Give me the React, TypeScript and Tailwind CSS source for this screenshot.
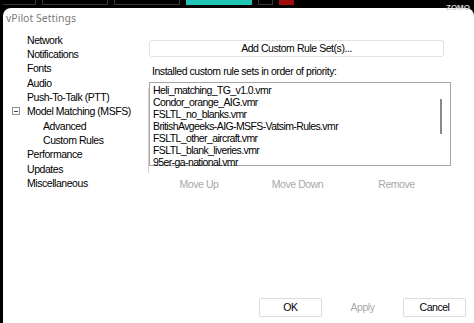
import React from "react";

const treeItems: { label: string; indent?: boolean; expander?: boolean }[] = [
  { label: "Network" },
  { label: "Notifications" },
  { label: "Fonts" },
  { label: "Audio" },
  { label: "Push-To-Talk (PTT)" },
  { label: "Model Matching (MSFS)", expander: true },
  { label: "Advanced", indent: true },
  { label: "Custom Rules", indent: true },
  { label: "Performance" },
  { label: "Updates" },
  { label: "Miscellaneous" },
];

const ruleSets = [
  "Heli_matching_TG_v1.0.vmr",
  "Condor_orange_AIG.vmr",
  "FSLTL_no_blanks.vmr",
  "BritishAvgeeks-AIG-MSFS-Vatsim-Rules.vmr",
  "FSLTL_other_aircraft.vmr",
  "FSLTL_blank_liveries.vmr",
  "95er-ga-national.vmr",
];

function TopStrip() {
  return (
    <div className="flex h-[8px] gap-[6px] items-start">
      <div className="w-[33px] h-[5px] border-r border-b border-[#3a3a3a]" />
      <div className="w-[66px] h-[5px] border-x border-b border-[#3a3a3a]" />
      <div className="w-[66px] h-[5px] border-x border-b border-[#3a3a3a]" />
      <div className="w-[66px] h-[5px] bg-[#1fc4b4]" />
      <div className="w-[15px] h-[5px] border-x border-b border-[#3a3a3a]" />
      <div className="w-[15px] h-[5px] bg-[#a00c0c]" />
    </div>
  );
}

export default function App() {
  return (
    <div
      className="relative w-[474px] h-[323px] bg-black overflow-hidden pl-[3px]"
      style={{ fontFamily: '"Liberation Sans", Arial, sans-serif' }}
    >
      <TopStrip />
      <div className="absolute right-[4px] top-[4px] text-[8px] leading-[8px] text-[#cfcfcf] font-bold">
        ZOMO
      </div>
      <div className="bg-white rounded-t-[8px] h-[330px] flex flex-col tracking-[-0.45px]">
        <div
          className="h-[24px] pl-[3px] pt-[5px] text-[10.5px] leading-none tracking-normal text-[#7a7a7a]"
          style={{ fontFamily: '"Noto Sans", sans-serif' }}
        >
          vPilot Settings
        </div>
        <div className="flex">
          <div className="w-[145px] pt-[1px] h-[158px]">
            {treeItems.map((t) => (
              <div
                key={t.label}
                className={`relative flex items-center h-[14.3px] text-[10.5px] leading-none text-black ${
                  t.indent ? "pl-[40px]" : "pl-[24px]"
                }`}
              >
                {t.expander && (
                  <span className="absolute left-[9px] top-[3px] w-[8px] h-[8px] border border-[#909090] flex items-center justify-center">
                    <span className="w-[4px] h-px bg-[#404040]" />
                  </span>
                )}
                {t.label}
              </div>
            ))}
          </div>
          <div className="w-px h-[85px] mt-[56px] bg-[#d0d0d0]" />
          <div className="flex flex-col w-[303px]">
            <button className="h-[17px] w-[295px] mt-[8px] border border-[#e2e2e2] rounded-[3px] text-[10.5px] leading-none text-black">
              Add Custom Rule Set(s)...
            </button>
            <div className="text-[10.5px] leading-none mt-[9px] pl-[3px] text-black">
              Installed custom rule sets in order of priority:
            </div>
            <div className="relative mt-[5px] w-[302px] h-[84px] border border-[#a6a6a6] pl-[3px] pt-[1px]">
              {ruleSets.map((r) => (
                <div key={r} className="h-[12px] text-[10.5px] leading-[12px] tracking-[-0.6px] text-black">
                  {r}
                </div>
              ))}
              <div className="absolute right-[8px] top-[16px] w-[2px] h-[35px] bg-[#8a8a8a]" />
            </div>
            <div className="flex mt-[13px] text-[10.5px] leading-none text-[#a8a8a8]">
              <div className="w-[99px] text-center pl-[1px]">Move Up</div>
              <div className="w-[99px] text-center">Move Down</div>
              <div className="w-[99px] text-center">Remove</div>
            </div>
          </div>
        </div>
        <div className="flex justify-end items-center pr-[8px] mt-[108px] text-[10.5px]">
          <button className="w-[63px] h-[19px] border border-[#dcdcdc] rounded-[2px] text-black">OK</button>
          <div className="w-[81px] text-center text-[#a8a8a8]">Apply</div>
          <button className="w-[63px] h-[19px] border border-[#dcdcdc] rounded-[2px] text-black">Cancel</button>
        </div>
      </div>
    </div>
  );
}
